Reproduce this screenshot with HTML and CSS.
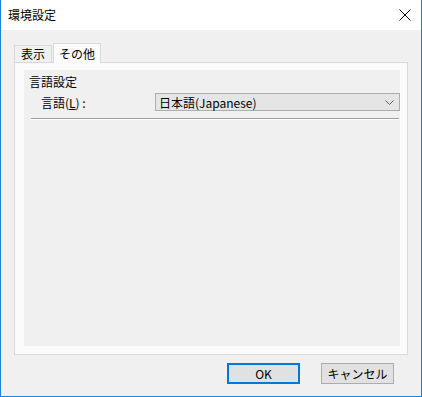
FILE: index.html
```html
<!DOCTYPE html>
<html lang="ja">
<head>
    <meta charset="UTF-8">
    <title>環境設定</title>
    <link rel="stylesheet" href="styles.css">
</head>
<body>
    <div class="window">
        <div class="titlebar">
            <span class="title">環境設定</span>
            <span class="close">
                <svg width="12" height="12" viewBox="0 0 12 12">
                    <path d="M0.5 0.5 L11.5 11.5 M11.5 0.5 L0.5 11.5" stroke="#000" stroke-width="1" fill="none"/>
                </svg>
            </span>
        </div>
        <div class="client">
            <div class="tabs">
                <div class="tab">表示</div>
                <div class="tab active">その他</div>
            </div>
            <div class="panel">
                <div class="group">
                    <div class="group-title">言語設定</div>
                    <div class="row">
                        <label class="label">言語(<u>L</u>) :</label>
                        <div class="combo">
                            <span>日本語(Japanese)</span>
                            <svg width="9" height="5" viewBox="0 0 9 5">
                                <path d="M0.5 0.5 L4.5 4.5 L8.5 0.5" stroke="#606060" stroke-width="1" fill="none"/>
                            </svg>
                        </div>
                    </div>
                    <div class="separator"></div>
                </div>
            </div>
            <div class="buttons">
                <button class="btn default">OK</button>
                <button class="btn">キャンセル</button>
            </div>
        </div>
    </div>
</body>
</html>
```

FILE: styles.css
```css
html, body {
    margin: 0;
    padding: 0;
}

body {
    font-family: "Noto Sans CJK JP", "Liberation Sans", sans-serif;
    font-size: 12px;
    color: #000;
    background: #fff;
}

.window {
    width: 422px;
    height: 397px;
    box-sizing: border-box;
    border: 1px solid #1883d7;
    border-top: none;
    display: flex;
    flex-direction: column;
    background: #f0f0f0;
}

.titlebar {
    height: 30px;
    background: #fff;
    display: flex;
    align-items: center;
    justify-content: space-between;
    padding: 0 10px 0 7px;
    flex-shrink: 0;
}

.title {
    font-size: 12px;
    line-height: 14px;
}

.close {
    display: flex;
    width: 12px;
    height: 12px;
}

.client {
    flex: 1;
    display: flex;
    flex-direction: column;
    padding: 13px 13px 0 13px;
}

.tabs {
    display: flex;
    align-items: flex-end;
    height: 19px;
}

.tab {
    height: 17px;
    line-height: 15px;
    padding: 0 6px;
    border: 1px solid #d9d9d9;
    border-bottom: none;
    background: #f0f0f0;
    box-sizing: border-box;
}

.tab.active {
    height: 20px;
    line-height: 19px;
    background: #fbfbfb;
    margin-bottom: -1px;
    position: relative;
    z-index: 1;
    margin-left: 1px;
    padding: 0 5px;
}

.panel {
    height: 293px;
    box-sizing: border-box;
    border: 1px solid #d9d9d9;
    background: #fbfbfb;
    padding: 7px 7px 8px 9px;
}

.group {
    height: 100%;
    box-sizing: border-box;
    background: #f0f0f0;
    padding: 5px 0 0 5px;
}

.group-title {
    line-height: 14px;
    margin-bottom: 4px;
}

.row {
    display: flex;
    align-items: center;
    padding-left: 12px;
}

.label {
    width: 114px;
}

.combo {
    flex: 1;
    height: 18px;
    box-sizing: border-box;
    border: 1px solid #adadad;
    background: #e5e5e5;
    display: flex;
    align-items: center;
    justify-content: space-between;
    padding: 0 5px 0 3px;
}

.separator {
    margin: 7px 1px 0 2px;
    height: 0;
    border-top: 1px solid #a0a0a0;
    border-bottom: 1px solid #fff;
}

.buttons {
    display: flex;
    justify-content: flex-end;
    gap: 21px;
    padding: 8px 14px 0 0;
}

.btn {
    width: 73px;
    height: 21px;
    box-sizing: border-box;
    font-family: inherit;
    font-size: 12px;
    background: #e1e1e1;
    border: 1px solid #adadad;
    padding: 0;
    line-height: 18px;
}

.btn.default {
    border: 2px solid #0078d7;
}
```
